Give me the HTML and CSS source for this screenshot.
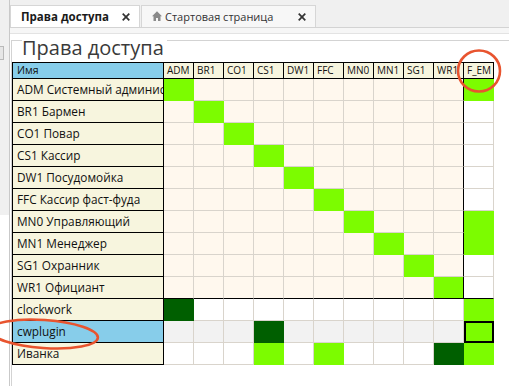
FILE: index.html
```html
<!DOCTYPE html>
<html lang="ru">
<head>
<meta charset="utf-8">
<title>Права доступа</title>
<link rel="stylesheet" href="styles.css">
</head>
<body>
<div class="app">
  <aside class="side">
    <div class="side-top"><span class="side-btn"></span></div>
  </aside>
  <div class="main">
    <div class="tabbar">
      <div class="tab active">
        <span class="tab-title">Права доступа</span>
        <svg class="close" width="8" height="8" viewBox="0 0 8 8"><path d="M0.7 0.7L7.3 7.3M7.3 0.7L0.7 7.3" stroke="#333" stroke-width="1.7" fill="none"/></svg>
      </div>
      <div class="tab">
        <svg class="home" width="10" height="10" viewBox="0 0 10 10"><path d="M5 0.3L0 5.2H1.5V10H4V7H6V10H8.5V5.2H10Z" fill="#8a8a8a"/></svg>
        <span class="tab-text">Стартовая страница</span>
        <svg class="close" width="8" height="8" viewBox="0 0 8 8"><path d="M0.7 0.7L7.3 7.3M7.3 0.7L0.7 7.3" stroke="#333" stroke-width="1.7" fill="none"/></svg>
      </div>
    </div>
    <div class="strip"></div>
    <div class="content">
      <div class="group">
        <div class="group-head"><span class="gl short"></span><h1>Права доступа</h1><span class="gl long"></span></div>
        <div class="grid">
          <div class="h hn">Имя</div><div class="h">ADM</div><div class="h">BR1</div><div class="h">CO1</div><div class="h">CS1</div><div class="h">DW1</div><div class="h">FFC</div><div class="h">MN0</div><div class="h">MN1</div><div class="h">SG1</div><div class="h">WR1</div><div class="h">F_EM</div>

          <div class="n">ADM Системный администратор</div><div class="d on"></div><div class="d"></div><div class="d"></div><div class="d"></div><div class="d"></div><div class="d"></div><div class="d"></div><div class="d"></div><div class="d"></div><div class="d r"></div><div class="d on"></div>
          <div class="n">BR1 Бармен</div><div class="d"></div><div class="d on"></div><div class="d"></div><div class="d"></div><div class="d"></div><div class="d"></div><div class="d"></div><div class="d"></div><div class="d"></div><div class="d r"></div><div class="d w"></div>
          <div class="n">CO1 Повар</div><div class="d"></div><div class="d"></div><div class="d on"></div><div class="d"></div><div class="d"></div><div class="d"></div><div class="d"></div><div class="d"></div><div class="d"></div><div class="d r"></div><div class="d w"></div>
          <div class="n">CS1 Кассир</div><div class="d"></div><div class="d"></div><div class="d"></div><div class="d on"></div><div class="d"></div><div class="d"></div><div class="d"></div><div class="d"></div><div class="d"></div><div class="d r"></div><div class="d w"></div>
          <div class="n">DW1 Посудомойка</div><div class="d"></div><div class="d"></div><div class="d"></div><div class="d"></div><div class="d on"></div><div class="d"></div><div class="d"></div><div class="d"></div><div class="d"></div><div class="d r"></div><div class="d w"></div>
          <div class="n">FFC Кассир фаст-фуда</div><div class="d"></div><div class="d"></div><div class="d"></div><div class="d"></div><div class="d"></div><div class="d on"></div><div class="d"></div><div class="d"></div><div class="d"></div><div class="d r"></div><div class="d w"></div>
          <div class="n">MN0 Управляющий</div><div class="d"></div><div class="d"></div><div class="d"></div><div class="d"></div><div class="d"></div><div class="d"></div><div class="d on"></div><div class="d"></div><div class="d"></div><div class="d r"></div><div class="d on"></div>
          <div class="n">MN1 Менеджер</div><div class="d"></div><div class="d"></div><div class="d"></div><div class="d"></div><div class="d"></div><div class="d"></div><div class="d"></div><div class="d on"></div><div class="d"></div><div class="d r"></div><div class="d on"></div>
          <div class="n">SG1 Охранник</div><div class="d"></div><div class="d"></div><div class="d"></div><div class="d"></div><div class="d"></div><div class="d"></div><div class="d"></div><div class="d"></div><div class="d on"></div><div class="d r"></div><div class="d w"></div>
          <div class="n">WR1 Официант</div><div class="d b"></div><div class="d b"></div><div class="d b"></div><div class="d b"></div><div class="d b"></div><div class="d b"></div><div class="d b"></div><div class="d b"></div><div class="d b"></div><div class="d on r b"></div><div class="d w b"></div>

          <div class="n">clockwork</div><div class="d dk"></div><div class="d w"></div><div class="d w"></div><div class="d w"></div><div class="d w"></div><div class="d w"></div><div class="d w"></div><div class="d w"></div><div class="d w"></div><div class="d w"></div><div class="d on"></div>
          <div class="n sel">cwplugin</div><div class="d g"></div><div class="d g"></div><div class="d g"></div><div class="d dk"></div><div class="d g"></div><div class="d g"></div><div class="d g"></div><div class="d g"></div><div class="d g"></div><div class="d g"></div><div class="d on cur"></div>
          <div class="n">Иванка</div><div class="d w"></div><div class="d w"></div><div class="d w"></div><div class="d on"></div><div class="d w"></div><div class="d on"></div><div class="d w"></div><div class="d w"></div><div class="d w"></div><div class="d dk"></div><div class="d on"></div>
        </div>
      </div>
    </div>
  </div>
  <svg class="annot" width="509" height="386" viewBox="0 0 509 386">
    <ellipse cx="479" cy="71" rx="21" ry="20.5" fill="none" stroke="#e8542f" stroke-width="2.6"/>
    <ellipse cx="44" cy="334" rx="54" ry="14" transform="rotate(4 44 334)" fill="none" stroke="#e8542f" stroke-width="2.6"/>
  </svg>
</div>
</body>
</html>
```

FILE: styles.css
```css
html, body {
  margin: 0;
  padding: 0;
  background: #ffffff;
}

body {
  width: 509px;
  height: 386px;
  overflow: hidden;
  font-family: "Open Sans", "Noto Sans", "Liberation Sans", sans-serif;
  color: #111;
}

.app {
  position: relative;
  display: flex;
  width: 509px;
  height: 386px;
}

.side {
  width: 9px;
  border-right: 1px solid #c9c9c9;
  display: flex;
  flex-direction: column;
}

.side-top {
  height: 215px;
  background: #f0f0f0;
  padding-top: 46px;
  box-sizing: border-box;
}

.side-btn {
  display: block;
  width: 3px;
  height: 12px;
  border: 1px solid #b9b9b9;
  border-left: none;
  background: #e6e6e6;
}

.main {
  flex: 1;
  display: flex;
  flex-direction: column;
  min-width: 0;
}

.tabbar {
  height: 27px;
  background: #f0f0f0;
  border-bottom: 1px solid #d3d3d3;
  display: flex;
  align-items: flex-end;
}

.tab {
  height: 22px;
  box-sizing: border-box;
  display: flex;
  align-items: center;
  border: 1px solid #d6d6d6;
  border-bottom: none;
  background: #f7f7f7;
  width: 175px;
  margin-left: 1px;
  padding: 0 9px 0 10px;
  font-size: 11px;
  color: #333;
}

.tab.active {
  width: 130px;
  margin-left: 0;
  background: #ffffff;
}

.tab-title {
  font-weight: 700;
  color: #1a1a1a;
  font-size: 11.5px;
}

.home {
  margin-right: 3px;
  margin-top: -1px;
}

.tab-text {
  white-space: nowrap;
}

.close {
  margin-left: auto;
}

.strip {
  height: 5px;
  background: #f6f6f6;
  border-bottom: 1px solid #e3e3e3;
}

.content {
  flex: 1;
  padding: 6px 0 0 1px;
  display: flex;
  flex-direction: column;
}

.group {
  flex: 1;
  border-left: 1px solid #d3d3d3;
}

.group-head {
  height: 22px;
  display: flex;
  align-items: flex-start;
}

.gl {
  border-top: 1px solid #d3d3d3;
}

.gl.short {
  width: 10px;
}

.gl.long {
  flex: 1;
  margin-left: 3px;
}

.group-head h1 {
  margin: 1px 0 0;
  font-size: 20px;
  font-weight: 400;
  line-height: 14px;
  color: #3a3a3a;
  white-space: nowrap;
}

.grid {
  display: grid;
  grid-template-columns: 151px repeat(11, 30px);
  grid-template-rows: 16px repeat(13, 22px);
  width: max-content;
  border-left: 1px solid #000;
  border-top: 1px solid #000;
}

.grid > div {
  box-sizing: border-box;
  border-right: 1px solid #d9d4cc;
  border-bottom: 1px solid #d9d4cc;
}

.grid > .h {
  border-color: #000;
  background: #f7f5de;
  font-size: 10px;
  line-height: 15px;
  padding-left: 3px;
  white-space: nowrap;
  overflow: hidden;
  color: #111;
}

.grid > .h.hn {
  background: #87cdea;
  padding-left: 4px;
  font-size: 10.5px;
}

.grid > .n {
  border-color: #000;
  background: #f7f5de;
  font-size: 11.8px;
  line-height: 21px;
  padding-left: 4px;
  white-space: nowrap;
  overflow: hidden;
}

.grid > .n.sel {
  background: #87cdea;
}

.grid > .d {
  background: #fff8ee;
}

.grid > .d.w {
  background: #ffffff;
}

.grid > .d.g {
  background: #f2f2f2;
}

.grid > .d.on {
  background: #7cfc00;
  border-color: #7cfc00;
}

.grid > .d.dk {
  background: #005f00;
  border-color: #005f00;
}

.grid > .d.r {
  border-right-color: #000;
}

.grid > .d.b {
  border-bottom-color: #000;
}

.grid > .d.cur {
  border-color: #000;
  box-shadow: inset 2px 2px 0 #000, inset -1px -1px 0 #000;
}

.annot {
  position: absolute;
  left: 0;
  top: 0;
  pointer-events: none;
}
```
